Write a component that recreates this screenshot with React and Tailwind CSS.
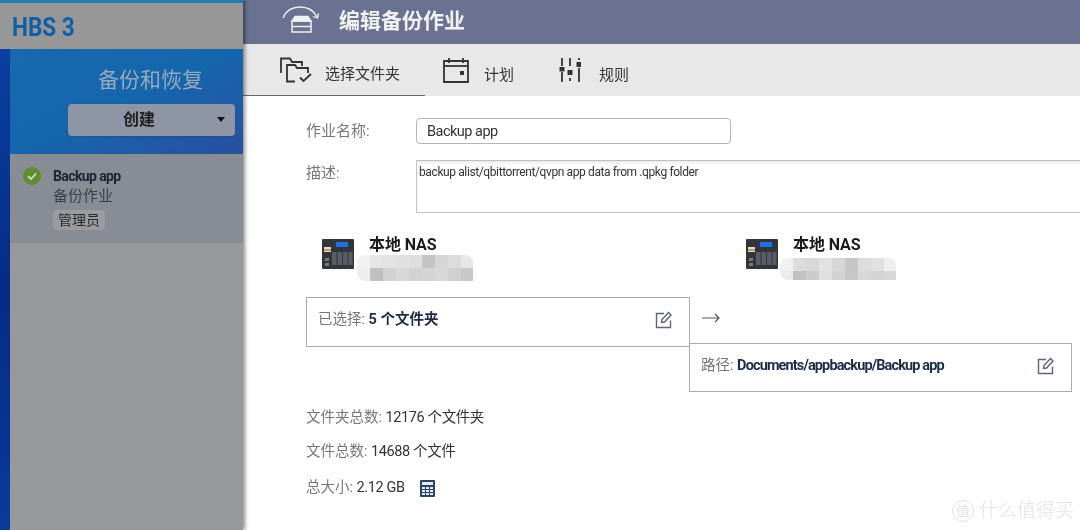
const font = { fontFamily: '"Roboto","Noto Sans CJK SC",sans-serif' };

function NasIcon() {
  return (
    <svg width="32" height="30" viewBox="0 0 32 30" className="shrink-0">
      <rect width="32" height="30" rx="1" fill="#33353c" />
      <rect x="14" y="3" width="12" height="5" fill="#1f6fe0" />
      <rect x="2" y="8" width="7" height="5" fill="#ddd" />
      <rect x="2" y="10" width="7" height="2" fill="#c79a4a" />
      <rect x="10" y="13" width="4.5" height="13" fill="#5a5c64" />
      <rect x="15.5" y="13" width="4.5" height="13" fill="#5a5c64" />
      <rect x="21" y="13" width="4.5" height="13" fill="#5a5c64" />
      <rect x="26.5" y="13" width="4" height="13" fill="#5a5c64" />
      <rect x="3" y="19" width="4" height="3" fill="#777" />
      <rect x="3" y="24" width="4" height="3" fill="#777" />
    </svg>
  );
}

const pix1 = [
  ["bg-[#f1f1f1]", "bg-[#e6e6e6]", "bg-[#e4e4e4]", "bg-[#e0e0e0]", "bg-[#dedede]", "bg-[#c4c4c4]", "bg-[#d6d6d6]", "bg-[#dcdcdc]", "bg-[#e6e6e6]"],
  ["bg-[#eeeeee]", "bg-[#c0c0c0]", "bg-[#d2d2d2]", "bg-[#d8d8d8]", "bg-[#d2d2d2]", "bg-[#d4d4d4]", "bg-[#d8d8d8]", "bg-[#d0d0d0]", "bg-[#c8c8c8]"],
];
const pix2 = [
  ["bg-[#f1f1f1]", "bg-[#dcdcdc]", "bg-[#d8d8d8]", "bg-[#e2e2e2]", "bg-[#d6d6d6]", "bg-[#c6c6c6]", "bg-[#dcdcdc]", "bg-[#e0e0e0]", "bg-[#eeeeee]"],
  ["bg-[#ececec]", "bg-[#c2c2c2]", "bg-[#cccccc]", "bg-[#e0e0e0]", "bg-[#d2d2d2]", "bg-[#c8c8c8]", "bg-[#d8d8d8]", "bg-[#d4d4d4]", "bg-[#d8d8d8]"],
];

function Pixels({ rows, top }) {
  return (
    <div className={`flex flex-col w-[116px] overflow-hidden rounded-l-lg rounded-tr-lg ${top}`}>
      {rows.map((r, i) => (
        <div key={i} className="flex">
          {r.map((c, j) => (
            <div key={j} className={`w-[13px] h-[13px] shrink-0 ${c}`} />
          ))}
        </div>
      ))}
    </div>
  );
}

function Nas({ rows, className, top, shift }) {
  return (
    <div className={`flex ${className}`}>
      <NasIcon />
      <div className="ml-[15px] -mt-[4px]">
        <div className="text-[16px] leading-[20px] font-bold text-[#1a1a1a] tracking-[-0.1px]">本地 NAS</div>
        <div className={shift}>
          <Pixels rows={rows} top={top} />
        </div>
      </div>
    </div>
  );
}

function EditIcon() {
  return (
    <svg width="18" height="18" viewBox="0 0 18 18" fill="none" stroke="#5f6578" strokeWidth="1.4" className="shrink-0">
      <path d="M9 2.5H1.5V16.5H15.5V9.5" />
      <path d="M6.5 11.5L7 8.5L13.5 1.5L16 4L9.5 11L6.5 11.5Z" />
    </svg>
  );
}

export default function App() {
  return (
    <div style={font} className="flex w-[1080px] h-[530px] overflow-hidden bg-white blur-[0.4px]">
      <aside className="w-[243px] shrink-0 flex flex-col bg-[#9a9c9f] z-10 shadow-[2px_0_4px_rgba(0,0,0,0.45)]">
        <div className="h-[3px] bg-[#1f7fb0]" />
        <div className="h-[46px] bg-[#979797] flex items-center pl-[12px] pt-[3px]">
          <span className="text-[25px] font-bold text-[#0f5fa6] scale-x-[0.9] origin-left">HBS 3</span>
        </div>
        <div className="flex flex-1">
          <div className="w-[10px] bg-gradient-to-b from-[#0b3f9e] via-[#052c86] to-[#0a3a9a]" />
          <div className="flex-1 flex flex-col">
            <div className="h-[105px] bg-gradient-to-br from-[#1a69ad] via-[#1466ad] to-[#274f9e] flex flex-col items-end pr-[8px]">
              <div className="text-[21px] leading-[30px] text-[#9aa9bb] mt-[16px] mr-[32px]">备份和恢复</div>
              <div className="w-[167px] h-[32px] mt-[9px] rounded bg-[#8e95a5] flex items-center justify-center pr-[25px] relative shadow-sm">
                <span className="text-[16px] font-bold text-[#222]">创建</span>
                <span className="absolute right-[10px] top-[13px] w-0 h-0 border-x-[4px] border-x-transparent border-t-[5px] border-t-[#111]" />
              </div>
            </div>
            <div className="h-[89px] bg-[#888c94] flex pl-[13px] pt-[12px]">
              <svg width="18" height="18" viewBox="0 0 18 18" className="mt-[1px] shrink-0">
                <circle cx="9" cy="9" r="9" fill="#5c8f2d" />
                <path d="M5 9.2L8 12L13 6.5" fill="none" stroke="#d8d8d8" strokeWidth="1.8" />
              </svg>
              <div className="ml-[12px] flex flex-col items-start">
                <div className="text-[14px] leading-[20px] font-bold text-[#1c2433] tracking-[-0.6px]">Backup app</div>
                <div className="text-[15px] leading-[21px] text-[#3c3f46]">备份作业</div>
                <div className="mt-[3px] px-[5px] h-[20px] rounded bg-[#9a9b9e] text-[14px] leading-[20px] text-[#2a2a2a]">管理员</div>
              </div>
            </div>
            <div className="flex-1 bg-[#98999c]" />
          </div>
        </div>
      </aside>

      <main className="flex-1 min-w-0 flex flex-col">
        <header className="h-[44px] bg-[#6b7190] flex items-center pl-[39px]">
          <svg width="38" height="32" viewBox="0 0 38 32" fill="none" stroke="#f0f0f0" strokeWidth="1.3" className="shrink-0 -mt-[7px]">
            <path d="M1 15C5 5 13 4 18 4C26 4 32 8 35 14" />
            <path d="M31 13.5L35.5 15L36.5 10.5" />
            <path d="M10 18L13 13.5H26L29 18Z" fill="#f0f0f0" />
            <path d="M10 18H29V23.5H10ZM10 23.5H29V29H10Z" strokeWidth="1.5" />
          </svg>
          <span className="text-[21px] font-bold text-[#f2f2f2] ml-[19px]">编辑备份作业</span>
        </header>
        <nav className="h-[52px] bg-[#e8e8e8] flex items-stretch">
          <div className="w-[182px] border-b border-[#666] flex items-center pl-[37px]">
            <svg width="32" height="26" viewBox="0 0 32 26" fill="none" stroke="#333" strokeWidth="1.8" className="shrink-0">
              <path d="M1 16V1.5H10L12 5H22V9" />
              <path d="M7 22V8H15L17 11H28V16" />
              <path d="M15 24.5H7V22" />
              <path d="M20 20.5L23.5 24L31 17" />
            </svg>
            <span className="text-[15px] text-[#333] ml-[13px] mt-[10px]">选择文件夹</span>
          </div>
          <div className="flex items-center ml-[18px]">
            <svg width="26" height="26" viewBox="0 0 26 26" fill="none" stroke="#333" strokeWidth="1.8" className="shrink-0">
              <path d="M1 4H25V25H1V4Z" />
              <path d="M1 9H25" />
              <path d="M6 1V6M20 1V6" />
              <rect x="17" y="14" width="4" height="4" fill="#333" stroke="none" />
            </svg>
            <span className="text-[15px] text-[#333] ml-[15px] mt-[10px]">计划</span>
          </div>
          <div className="flex items-center ml-[45px]">
            <svg width="22" height="26" viewBox="0 0 22 26" fill="none" stroke="#333" strokeWidth="1.8" className="shrink-0 ml-[0px]">
              <path d="M3 1V9M3 15V25" />
              <rect x="0.5" y="10" width="5" height="4.5" fill="#333" stroke="none" />
              <path d="M11 1V9M11 21V24" />
              <rect x="8.5" y="13" width="5" height="5" fill="#333" stroke="none" />
              <path d="M20 1V3M20 11V25" />
              <rect x="17.5" y="5" width="5" height="5" fill="#333" stroke="none" />
            </svg>
            <span className="text-[15px] text-[#333] ml-[18px] mt-[10px]">规则</span>
          </div>
        </nav>

        <section className="flex-1 flex flex-col pl-[63px] relative overflow-hidden">
          <div className="flex items-center mt-[22px]">
            <label className="w-[110px] shrink-0 text-[15px] text-[#777]">作业名称:</label>
            <div className="w-[315px] h-[26px] rounded border border-[#b5b5b5] pl-[10px] text-[14.5px] tracking-[-0.5px] leading-[26px] text-[#333]">Backup app</div>
          </div>
          <div className="flex mt-[16px]">
            <label className="w-[110px] shrink-0 text-[15px] text-[#777] mt-[2px]">描述:</label>
            <div className="w-[700px] h-[53px] border border-[#c4c4c4] border-t-[#b9c4bc] shadow-[inset_0_2px_3px_rgba(0,0,0,0.08)] pl-[2px] pt-[3px] text-[12px] tracking-[-0.39px] leading-[16px] text-[#333] shrink-0">
              backup alist/qbittorrent/qvpn app data from .qpkg folder
            </div>
          </div>

          <div className="flex mt-[26px]">
            <Nas rows={pix1} className="w-[424px] pl-[16px]" shift="-ml-[12px]" top="mt-[0px]" />
            <Nas rows={pix2} className="pl-[16px]" shift="-ml-[13px]" top="mt-[3px] h-[22px]" />
          </div>

          <div className="flex mt-[16px]">
            <div className="w-[384px] h-[50px] border border-[#ababab] flex items-center justify-between pl-[11px] pr-[16px] pb-[4px] -mr-[1px] shrink-0 self-start">
              <span className="text-[14.5px] -mt-[1px]"><span className="text-[#777]">已选择: </span><span className="font-bold text-[#1c2b4a]">5 个文件夹</span></span>
              <EditIcon />
            </div>
            <div className="flex flex-col">
              <svg width="18" height="12" viewBox="0 0 18 12" fill="none" stroke="#555" strokeWidth="1.2" className="ml-[13px] mt-[15px]">
                <path d="M0 6H17M13 2L17 6L13 10" />
              </svg>
              <div className="w-[383px] h-[49px] border border-[#ababab] mt-[19px] flex items-center justify-between pl-[11px] pr-[16px] pb-[3px] bg-white">
                <span className="text-[14.5px]"><span className="text-[#777]">路径: </span><span className="font-bold tracking-[-0.87px] text-[#1c2b4a]">Documents/appbackup/Backup app</span></span>
                <EditIcon />
              </div>
            </div>
          </div>

          <div className="text-[14.5px] leading-[20px] text-[#333] pt-[16px]">
            <div><span className="text-[#777]">文件夹总数: </span><span className="tracking-[-0.4px]">12176 个文件夹</span></div>
            <div className="mt-[14px]"><span className="text-[#777]">文件总数: </span><span className="tracking-[-0.4px]">14688 个文件</span></div>
            <div className="mt-[16px] flex items-center">
              <span><span className="text-[#777]">总大小: </span><span className="tracking-[-0.4px]">2.12 GB</span></span>
              <svg width="15" height="17" viewBox="0 0 15 17" className="ml-[15px] shrink-0">
                <rect width="15" height="17" rx="1" fill="#2c4566" />
                <rect x="2" y="2" width="11" height="3" fill="#e8ecf2" />
                <path d="M2 7h3v2H2zM6 7h3v2H6zM10 7h3v2h-3zM2 10h3v2H2zM6 10h3v2H6zM10 10h3v2h-3zM2 13h3v2H2zM6 13h3v2H6zM10 13h3v2h-3z" fill="#e8ecf2" />
              </svg>
            </div>
          </div>

          <div className="absolute right-[6px] bottom-[7px] flex items-center text-[#e3e3e3] text-[19px] leading-[24px]">
            <span className="w-[22px] h-[22px] mr-[5px] rounded-full border border-[#e3e3e3] text-[14px] leading-[20px] text-center">值</span>
            <span className="font-light">什么值得买</span>
          </div>
        </section>
      </main>
    </div>
  );
}
